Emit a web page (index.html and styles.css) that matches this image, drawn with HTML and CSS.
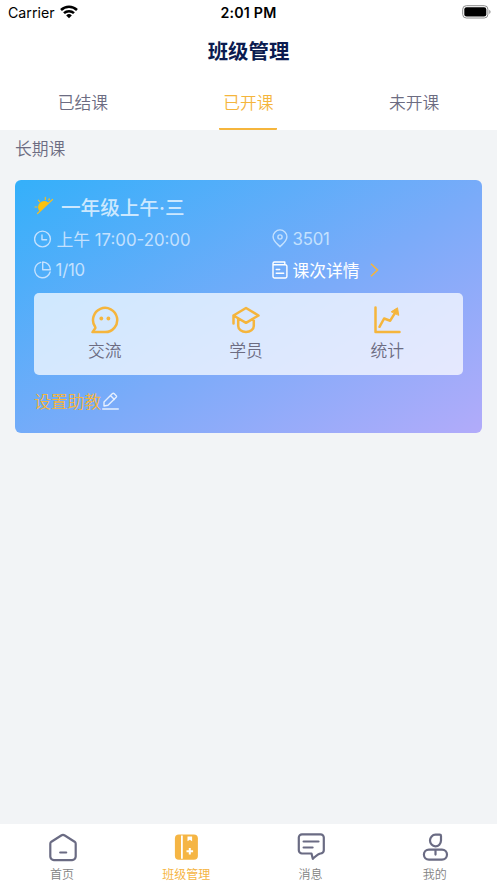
FILE: index.html
```html
<!DOCTYPE html>
<html lang="zh-CN">
<head>
<meta charset="utf-8">
<title>班级管理</title>
<link rel="stylesheet" href="styles.css">
</head>
<body>
<div class="app">
  <div class="status">
    <div class="carrier"><span>Carrier</span>
      <svg width="18" height="14" viewBox="0 0 18 14" fill="none" stroke="#000" stroke-width="2.5"><path d="M1 5a11.6 11.6 0 0 1 16 0M4 8.2a7.2 7.2 0 0 1 10 0"/><path d="M6.2 10.4a4 4 0 0 1 5.6 0L9 13.2z" fill="#000" stroke="none"/></svg>
    </div>
    <span class="time">2:01 PM</span>
    <svg class="battery" width="29" height="14" viewBox="0 0 29 14"><rect x=".7" y=".7" width="25.2" height="12.3" rx="3.6" fill="none" stroke="#8c8c8c" stroke-width="1"/><rect x="2.3" y="2.3" width="22" height="9.1" rx="2.2"/><path d="M27.3 4.7c1.7.8 1.7 3.4 0 4.2z" fill="#8c8c8c"/></svg>
  </div>
  <h1 class="title">班级管理</h1>
  <nav class="tabs">
    <div class="tab"><span>已结课</span></div>
    <div class="tab active"><span>已开课</span></div>
    <div class="tab"><span>未开课</span></div>
  </nav>
  <main class="content">
    <h2 class="section">长期课</h2>
    <section class="card">
      <div class="name">
        <svg width="20" height="20" viewBox="0 0 20 20"><path d="M5.7 15.5A6 6 0 0 1 14.7 7z" fill="#fbc20c"/><path d="M3.5 17.5 18.5 3.5M11.3 1.4v2.2M4.3 4.1l1.3 1.5M15.4 2.9l-.7 1.2M1 11h2" stroke="#f4bd20" stroke-width="1.2" stroke-linecap="round"/></svg>
        <span>一年级上午·三</span>
      </div>
      <div class="info">
        <div class="item">
          <svg width="18" height="18" viewBox="0 0 18 18" class="line"><circle cx="8.5" cy="9" r="7.9"/><path d="M8 5v4.7h4.6"/></svg>
          <span>上午 17:00-20:00</span>
        </div>
        <div class="item">
          <svg width="16" height="19" viewBox="0 0 16 19" class="line"><path d="M8 17.7C6 15.4 1.1 12.4 1.1 7.8a6.9 6.9 0 0 1 13.8 0c0 4.6-4.9 7.6-6.9 9.9z"/><circle cx="8" cy="8" r="2.1"/></svg>
          <span class="room">3501</span>
        </div>
        <div class="item">
          <svg width="18" height="18" viewBox="0 0 18 18" class="line"><path d="M6.7 1.4A7.8 7.8 0 1 0 16.1 11"/><path d="M8.7 1v7.8h7.7A7.8 7.8 0 0 0 8.7 1z"/></svg>
          <span class="count">1/10</span>
        </div>
        <div class="item detail">
          <svg width="16" height="18" viewBox="0 0 16 18" class="line"><path d="M2.4 1h10.4v2.8M1 3.8h12.5a1.4 1.4 0 0 1 1.4 1.4v10.4a1.4 1.4 0 0 1-1.4 1.4H2.4A1.4 1.4 0 0 1 1 15.6V2.4A1.4 1.4 0 0 1 2.4 1M4.2 8.5h3.5M4.2 12.3h7.5"/></svg>
          <span>课次详情</span>
          <svg class="chevron" width="9" height="14" viewBox="0 0 9 14" fill="none" stroke="#f5b53c" stroke-width="1.6"><path d="m1 .7 6.5 6.3L1 13.3"/></svg>
        </div>
      </div>
      <div class="actions">
        <div class="action">
          <svg width="28" height="28" viewBox="0 0 28 28" class="gold"><path d="M1.5 26.1h12.7A12.1 12.1 0 1 0 4.1 20.8c.5.8.3 1.3-.2 1.9z"/><circle cx="10.3" cy="12.5" r="1.9" class="solid"/><circle cx="17.4" cy="12.5" r="1.9" class="solid"/></svg>
          <span>交流</span>
        </div>
        <div class="action">
          <svg width="28" height="28" viewBox="0 0 28 28" class="gold"><path d="M1.5 9.5 14 2l12.5 7.5L14 16.8zM1.5 9.5v8M6.2 12.5v7.6c0 3.5 3.6 5.9 7.8 5.9s7.8-2.4 7.8-5.9v-7.6"/></svg>
          <span>学员</span>
        </div>
        <div class="action">
          <svg width="28" height="28" viewBox="0 0 28 28" class="gold"><path d="M2.5 1.5v24.6h24M6.5 20.8l4.6-8.3 6.1 2.2 5-8"/><path d="m18.5 5.6 6-3.8 1.2 7.2z" class="solid tip"/></svg>
          <span>统计</span>
        </div>
      </div>
      <div class="assistant"><span>设置助教</span>
        <svg width="17" height="18" viewBox="0 0 17 18" class="line"><path d="M.7 17h15.6M2 14V9.9l8.5-8.3q.8-.7 1.6 0l2.1 2.1q.7.7 0 1.5L6 13.3zM8.7 3.7l3.7 3.7"/></svg>
      </div>
    </section>
  </main>
  <footer class="bar">
    <div class="link">
      <svg width="30" height="30" viewBox="0 0 30 30" class="grey"><path d="M3.3 10.8q0-1.3 1.1-2.1l9.8-6.2q1.8-1.1 3.6 0l9.8 6.2q1.1.8 1.1 2.1v12.8a3.5 3.5 0 0 1-3.5 3.5H6.8a3.5 3.5 0 0 1-3.5-3.5zM13.2 19.5h6"/></svg>
      <span>首页</span>
    </div>
    <div class="link active">
      <svg width="30" height="30" viewBox="0 0 30 30"><rect x="3.9" y="1.5" width="23" height="25.2" rx="4" fill="#f5b544"/><path d="M10.9 2.5v23.2" stroke="#fff" stroke-width="1.8"/><path d="M16.5 3.5h4.6v4.8l-2.3-1.5-2.3 1.5z" fill="#fff"/><path d="M15.5 18.2h6.6m-3.3-3.3v6.6" stroke="#fff" stroke-width="2"/></svg>
      <span>班级管理</span>
    </div>
    <div class="link">
      <svg width="30" height="30" viewBox="0 0 30 30" class="grey"><path d="M6 1.3h18.6a3.2 3.2 0 0 1 3.2 3.2v12.8a3.2 3.2 0 0 1-3.2 3.2c-3 .3-5 3-7.8 5.3l-1.3-5.3H6a3.2 3.2 0 0 1-3.2-3.2V4.5A3.2 3.2 0 0 1 6 1.3zM7.6 8.5h14.9M7.6 14.5h9"/></svg>
      <span>消息</span>
    </div>
    <div class="link">
      <svg width="30" height="30" viewBox="0 0 30 30" class="grey"><path d="M15.5 1.7h4.2q1.3 0 1.3 1.3v4.6a5.5 5.8 0 1 1-5.5-5.9zM8.9 16.6h13.1a5 5 0 0 1 0 10H8.9a5 5 0 0 1 0-10zM15.5 18v3.6"/></svg>
      <span>我的</span>
    </div>
  </footer>
</div>
</body>
</html>
```
FILE: styles.css
```css
* { box-sizing: border-box; }
body {
  margin: 0;
  font-family: Inter, "Noto Sans CJK SC", sans-serif;
  font-weight: 350;
  color: #6c6c82;
  font-size: 16.8px;
}
svg { display: block; flex: none; }
.app { height: 883px; display: flex; flex-direction: column; background: #f2f4f6; overflow: hidden; }
.status {
  height: 25px; flex: none; background: #fff; color: #000; font-weight: 400;
  display: grid; grid-template-columns: 1fr auto 1fr; align-items: center;
  padding: 0 6px 0 8px; font-size: 14.2px;
}
.carrier { display: flex; align-items: center; gap: 5px; }
.carrier svg { margin-top: -1px; }
.time { font-weight: 600; letter-spacing: .2px; margin-right: 2px; }
.battery { justify-self: end; margin-top: -1px; }
.title {
  margin: 0; height: 52px; flex: none; background: #fff; color: #0b1b50;
  font-size: 20.4px; line-height: 54px; font-weight: 600; text-align: center;
}
.tabs { display: grid; grid-template-columns: repeat(3, 1fr); height: 52.5px; flex: none; background: #fff; }
.tab { display: flex; justify-content: center; }
.tab span { width: 58px; text-align: center; padding-top: 2px; line-height: 48px; }
.tab.active { color: #f5b53c; }
.tab.active span { border-bottom: 2.5px solid #f5b53c; border-radius: 1px; }
.content { flex: 1; padding: 0 15px; }
.section { margin: 0; font-size: 16.8px; font-weight: 350; line-height: 38px; height: 50.5px; }
.card {
  height: 253px; border-radius: 6px; padding: 11px 19px 0; display: flex; flex-direction: column;
  background: linear-gradient(150deg, #34b0fa 0%, #7aabf9 54%, #b2abfa 100%);
}
.name { display: flex; align-items: center; gap: 7px; height: 30px; color: #cce8fe; font-size: 19.6px; font-weight: 500; }
.info { display: grid; grid-template-columns: 238px 1fr; grid-auto-rows: 31px; padding-top: 2px; margin-left: -.5px; color: #c4e1fe; }
.item { display: flex; align-items: center; gap: 5px; font-weight: 400; }
.count, .room { letter-spacing: -.2px; }
.count { margin-left: -1px; }
.line { fill: none; stroke: currentColor; stroke-width: 1.4; stroke-linecap: round; stroke-linejoin: round; }
.detail { color: #fff; }
.chevron { margin-left: 5px; }
.actions {
  display: grid; grid-template-columns: repeat(3, 1fr); height: 82px; margin-top: 8px; padding-right: 5px;
  border-radius: 5px; background: rgba(255, 255, 255, .72);
}
.action { display: flex; flex-direction: column; align-items: center; padding-top: 13px; line-height: 34px; }
.gold { fill: none; stroke: #f5b53c; stroke-width: 2.5; stroke-linecap: round; stroke-linejoin: round; }
.solid { fill: #f5b53c; stroke: #f5b53c; stroke-width: 0; }
.tip { stroke-width: 1; }
.assistant { display: flex; align-items: center; height: 52px; color: #f5b53c; gap: 1px; }
.assistant svg { color: #e5effe; }
.bar { display: grid; grid-template-columns: repeat(4, 1fr); height: 59px; flex: none; background: #fff; font-size: 12px; color: #828282; }
.link { display: flex; flex-direction: column; align-items: center; padding-top: 9px; line-height: 23px; }
.link.active { color: #f5b544; font-weight: 400; }
.grey { fill: none; stroke: #6a6b83; stroke-width: 2.2; stroke-linecap: round; stroke-linejoin: round; }
```
